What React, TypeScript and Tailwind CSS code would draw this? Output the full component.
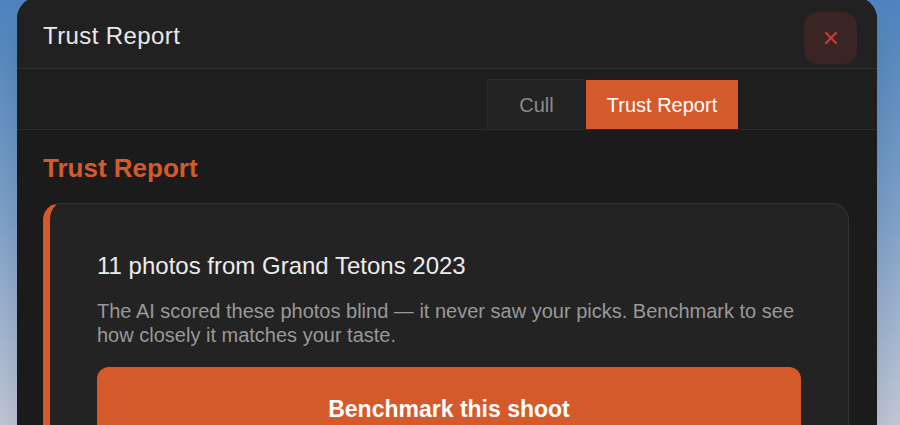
import React, { useState } from 'react';

const font = { fontFamily: '"Liberation Sans", Arial, sans-serif' };

function CloseIcon() {
  return (
    <svg width="14" height="14" viewBox="0 0 14 14" fill="none">
      <path d="M2 2L12 12M12 2L2 12" stroke="#c93a3a" strokeWidth="2.2" strokeLinecap="round" />
    </svg>
  );
}

export default function App() {
  const [tab, setTab] = useState<'cull' | 'trust'>('trust');

  return (
    <div
      className="w-[900px] h-[425px] overflow-hidden bg-gradient-to-b from-[#4d84bf] via-[#7ea3cc] to-[#c4cad9]"
      style={font}
    >
      <div className="ml-[17px] mt-[-3px] w-[860px] h-[460px] rounded-[22px] bg-[#1b1b1b] overflow-hidden shadow-2xl flex flex-col">
        {/* header */}
        <div className="h-[72px] shrink-0 flex items-start justify-between pl-[26px] pr-[20px] pt-[15px] bg-[#212121] border-b border-[#2f2f2f]">
          <h2 className="mt-[8px] text-[24px] leading-[32px] tracking-[0.4px] text-[#e9e9e9]">Trust Report</h2>
          <button className="w-[53px] h-[52px] rounded-[14px] bg-[#3a2424] flex items-center justify-center">
            <CloseIcon />
          </button>
        </div>

        {/* tabs */}
        <div className="h-[61px] shrink-0 flex items-end pl-[470px] bg-[#1e1e1e] border-b border-[#2c2c2c]">
          <button
            onClick={() => setTab('cull')}
            className="w-[98px] h-[50px] bg-[#232323] border-l border-t border-[#2d2d2d] text-[20px] text-[#8b8b8b] flex items-center justify-center"
          >
            Cull
          </button>
          <button
            onClick={() => setTab('trust')}
            className={
              tab === 'trust'
                ? 'w-[154px] h-[50px] bg-[#d55a2b] border border-b-0 border-[#1b2030] text-[20px] text-white flex items-center justify-center'
                : 'w-[154px] h-[50px] bg-[#232323] text-[20px] text-[#8b8b8b] flex items-center justify-center'
            }
          >
            Trust Report
          </button>
        </div>

        {/* content */}
        <div className="px-[26px] pt-[22px]">
          <h1 className="text-[26px] leading-[32px] font-bold text-[#d55a2b]">Trust Report</h1>

          <div className="mt-[19px] w-[806px] rounded-[17px] bg-[#232323] border border-[#333333] border-l-[7px] border-l-[#d55a2b] pl-[47px] pr-[47px] pt-[46px] pb-8">
            <h3 className="text-[24px] leading-[32px] text-[#ececec]">11 photos from Grand Tetons 2023</h3>
            <p className="mt-[17px] text-[20px] leading-[24px] text-[#999999]">
              The AI scored these photos blind — it never saw your picks. Benchmark to see how closely it matches your taste.
            </p>
            <button className="mt-[20px] w-full rounded-[12px] bg-[#d55a2b] pt-[28px] pb-[28px] text-[23px] leading-[28px] font-bold text-white">
              Benchmark this shoot
            </button>
          </div>
        </div>
      </div>
    </div>
  );
}
